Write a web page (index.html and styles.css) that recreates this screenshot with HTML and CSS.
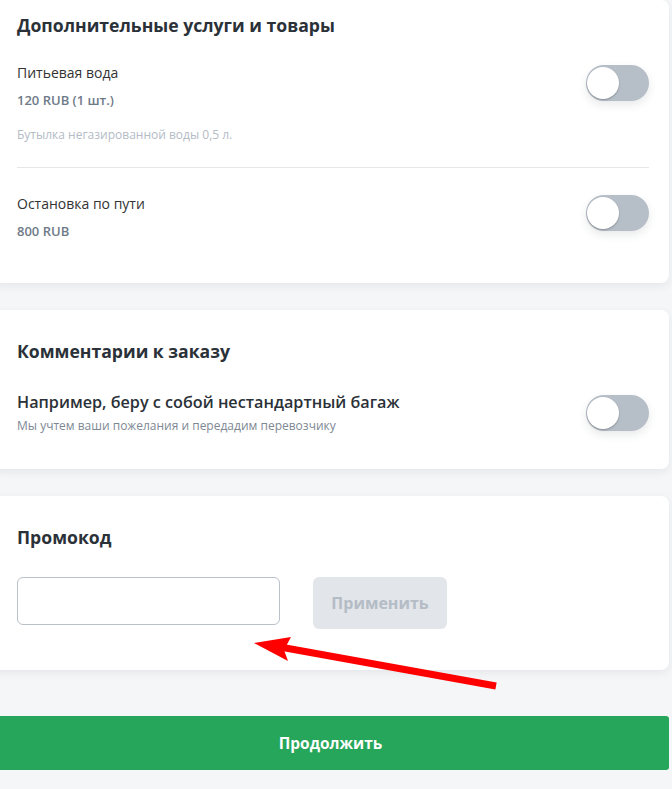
FILE: index.html
```html
<!DOCTYPE html>
<html lang="ru">
<head>
    <meta charset="UTF-8">
    <meta name="viewport" content="width=device-width, initial-scale=1.0">
    <title>Оформление заказа</title>
    <link rel="stylesheet" href="styles.css">
</head>
<body>
    <div class="page">
        <!-- Extra services -->
        <section class="card card-services">
            <h2 class="card-title">Дополнительные услуги и товары</h2>

            <div class="service service-first">
                <div class="service-info">
                    <div class="service-name">Питьевая вода</div>
                    <div class="service-price">120 RUB (1 шт.)</div>
                    <div class="service-desc">Бутылка негазированной воды 0,5 л.</div>
                </div>
                <span class="toggle"><span class="knob"></span></span>
            </div>

            <div class="service service-last">
                <div class="service-info">
                    <div class="service-name">Остановка по пути</div>
                    <div class="service-price">800 RUB</div>
                </div>
                <span class="toggle"><span class="knob"></span></span>
            </div>
        </section>

        <!-- Comments -->
        <section class="card card-comments">
            <h2 class="card-title">Комментарии к заказу</h2>
            <div class="comment-row">
                <div>
                    <div class="comment-title">Например, беру с собой нестандартный багаж</div>
                    <div class="comment-hint">Мы учтем ваши пожелания и передадим перевозчику</div>
                </div>
                <span class="toggle"><span class="knob"></span></span>
            </div>
        </section>

        <!-- Promo code -->
        <section class="card card-promo">
            <h2 class="card-title">Промокод</h2>
            <div class="promo-row">
                <input type="text" class="promo-input">
                <button class="promo-btn" disabled>Применить</button>
            </div>
        </section>

        <button class="continue-btn">Продолжить</button>

        <!-- annotation arrow -->
        <svg class="arrow" width="672" height="789" viewBox="0 0 672 789">
            <line x1="496" y1="686" x2="280" y2="647" stroke="#ff0000" stroke-width="7"/>
            <polygon points="254,643 291,637 284,650 288,661" fill="#ff0000"/>
        </svg>
    </div>
</body>
</html>
```

FILE: styles.css
```css
body {
    font-family: "Open Sans", "Noto Sans", Arial, sans-serif;
    background-color: #f5f6f8;
    color: #333;
    margin: 0;
    padding: 0;
}
.page {
    position: relative;
    width: 677px;
    margin-left: -8px;
    padding-bottom: 18px;
}
.card {
    background: #fff;
    border-radius: 8px;
    box-shadow: 0 3px 8px rgba(40, 50, 60, 0.08);
    padding-left: 25px;
    padding-right: 20px;
    margin-bottom: 27px;
}
.card-title {
    margin: 0;
    font-size: 17.6px;
    line-height: 22px;
    font-weight: 700;
    color: #2b3138;
}
.card-services {
    padding-top: 14px;
}
.service {
    display: flex;
    justify-content: space-between;
    align-items: flex-start;
}
.service-first {
    padding-top: 26px;
    padding-bottom: 24px;
    border-bottom: 1px solid #e4e6ea;
}
.service-last {
    padding-top: 25px;
    padding-bottom: 42px;
}
.service-name {
    font-size: 14px;
    line-height: 22px;
    color: #333;
}
.service-price {
    margin-top: 6px;
    font-size: 13px;
    line-height: 20px;
    font-weight: 600;
    color: #6e7a88;
}
.service-desc {
    margin-top: 17px;
    font-size: 12px;
    line-height: 16px;
    color: #b3bbc5;
}
.toggle {
    position: relative;
    display: block;
    width: 63px;
    height: 36px;
    border-radius: 18px;
    background: #b6bec8;
    margin-top: 3px;
    box-shadow: 0 4px 8px rgba(40, 50, 60, 0.1);
}
.knob {
    position: absolute;
    left: 1px;
    top: 2px;
    width: 32px;
    height: 32px;
    border-radius: 50%;
    background: #fff;
    box-shadow: 0 1px 2px rgba(0, 0, 0, 0.25);
}
.service-last .toggle {
    margin-top: 2px;
}
.card-comments {
    padding-top: 30px;
    padding-bottom: 35px;
}
.comment-row {
    display: flex;
    justify-content: space-between;
    align-items: flex-start;
    margin-top: 29px;
}
.comment-title {
    font-size: 16.2px;
    line-height: 22px;
    font-weight: 600;
    color: #2b3138;
}
.comment-hint {
    margin-top: 5px;
    font-size: 12px;
    line-height: 16px;
    color: #7d8894;
}
.comment-row .toggle {
    margin-top: 4px;
}
.card-promo {
    padding-top: 30px;
    padding-bottom: 41px;
    margin-bottom: 46px;
}
.promo-row {
    display: flex;
    align-items: flex-start;
    gap: 33px;
    margin-top: 29px;
}
.promo-input {
    width: 263px;
    height: 48px;
    box-sizing: border-box;
    border: 1px solid #b9c1ca;
    border-radius: 6px;
    background: #fff;
    font-family: inherit;
    font-size: 14px;
    padding: 0 12px;
    margin: 0;
}
.promo-btn {
    width: 134px;
    height: 52px;
    border: none;
    border-radius: 6px;
    background: #e2e5e9;
    color: #b4bcc5;
    font-family: inherit;
    font-size: 16px;
    font-weight: 700;
    cursor: not-allowed;
}
.continue-btn {
    display: block;
    width: 677px;
    height: 54px;
    border: none;
    border-radius: 3px;
    background: #26a65b;
    color: #fff;
    font-family: inherit;
    font-size: 15.5px;
    font-weight: 700;
    cursor: pointer;
}
.arrow {
    position: absolute;
    left: 8px;
    top: 0;
    pointer-events: none;
}
```
